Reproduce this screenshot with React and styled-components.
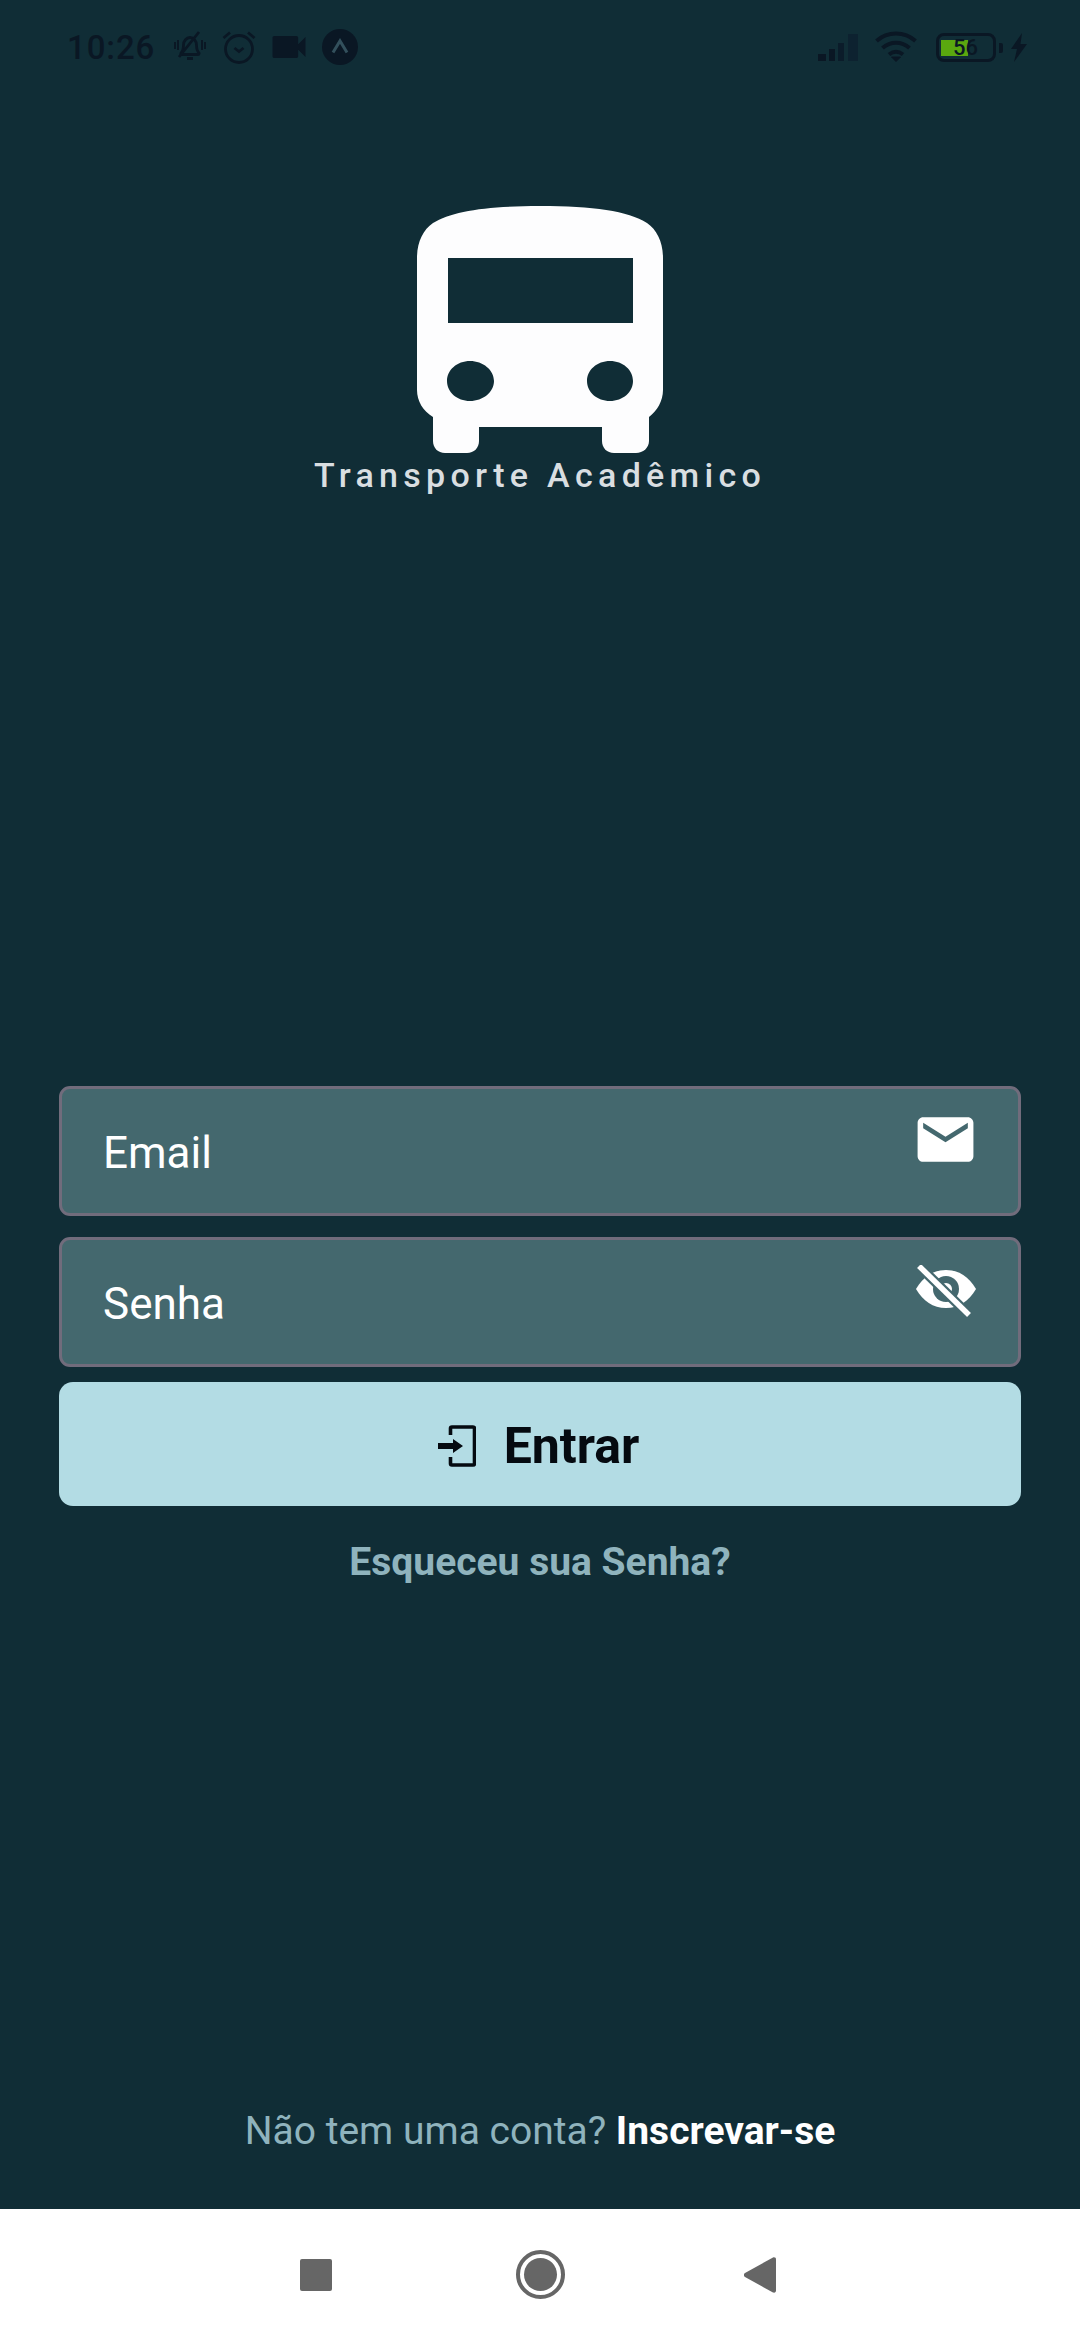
import React from 'react';
import styled, { createGlobalStyle } from 'styled-components';
import { MdEmail, MdVideocam } from 'react-icons/md';

const GlobalStyle = createGlobalStyle`
  html, body {
    margin: 0;
    padding: 0;
    background: #102d36;
  }
  * {
    box-sizing: border-box;
  }
`;

const Screen = styled.div`
  width: 1080px;
  height: 2340px;
  display: flex;
  flex-direction: column;
  background: #102d36;
  font-family: Roboto, "Liberation Sans", sans-serif;
  overflow: hidden;
`;

const StatusBar = styled.div`
  height: 94px;
  flex: none;
  display: flex;
  align-items: center;
  justify-content: space-between;
  padding: 0 53px 0 67px;
  color: #0a1724;
`;

const StatusGroup = styled.div`
  display: flex;
  align-items: center;
  gap: ${props => props.$gap || 15}px;
`;

const Time = styled.span`
  font-size: 33px;
  font-weight: 500;
  letter-spacing: .9px;
  margin-right: 3px;
`;

const VideoIcon = styled(MdVideocam)`
  margin: 0 -4px;
`;

const Battery = styled.div`
  position: relative;
  width: 60px;
  height: 29px;
  border: 3px solid #0a1724;
  border-radius: 8px;
  margin-right: 7px;

  &:after {
    content: '';
    position: absolute;
    right: -10px;
    top: 7px;
    width: 4px;
    height: 10px;
    border-radius: 0 2px 2px 0;
    background: #0a1724;
  }
`;

const BatteryFill = styled.div`
  position: absolute;
  left: 2px;
  top: 4px;
  width: 27px;
  height: 16px;
  background: #5aa80f;
`;

const BatteryText = styled.span`
  position: absolute;
  left: 14px;
  top: 0;
  font-size: 22px;
  line-height: 23px;
  font-weight: 500;
`;

const Main = styled.main`
  flex: 1;
  display: flex;
  flex-direction: column;
`;

const Logo = styled.div`
  display: flex;
  flex-direction: column;
  align-items: center;
  padding-top: 112px;
`;

const LogoTitle = styled.h1`
  margin: 4px 0 0;
  font-size: 34px;
  line-height: 36px;
  font-weight: 500;
  letter-spacing: 5.3px;
  color: #d9dee1;
`;

const Form = styled.form`
  display: flex;
  flex-direction: column;
  gap: 15px;
  padding: 0 59px;
  margin-top: 593px;
`;

const Field = styled.div`
  position: relative;
  height: 130px;
  margin-bottom: ${props => props.$spaced ? 6 : 0}px;
`;

const Input = styled.input`
  width: 100%;
  height: 100%;
  padding: 4px 100px 0 41px;
  border: 3px solid #716c7c;
  border-radius: 11px;
  outline: none;
  background: #44686e;
  color: #fff;
  font-family: inherit;
  font-size: 44px;

  &::placeholder {
    color: #fff;
    opacity: 1;
  }
`;

const FieldIcon = styled.div`
  position: absolute;
  right: ${props => props.$right}px;
  top: ${props => props.$top}px;
  display: flex;
  color: #fff;
`;

const SubmitButton = styled.button`
  height: 124px;
  display: flex;
  align-items: center;
  justify-content: center;
  gap: 28px;
  padding: 4px 3px 0 0;
  border: none;
  border-radius: 14px;
  background: #b3dce4;
  color: #050a10;
  font-family: inherit;
  font-size: 50px;
  font-weight: 700;
`;

const Forgot = styled.a`
  margin-top: 19px;
  text-align: center;
  font-size: 39px;
  line-height: 44px;
  font-weight: 700;
  color: #8fb3bd;
`;

const Footer = styled.p`
  margin: auto 0 57px;
  text-align: center;
  font-size: 39px;
  line-height: 42px;
  color: #8fb3bd;

  strong {
    color: #fff;
    font-weight: 700;
  }
`;

const NavBar = styled.nav`
  height: 131px;
  flex: none;
  display: flex;
  align-items: center;
  padding-left: 300px;
  background: #fff;
`;

const NavSquare = styled.div`
  width: 32px;
  height: 32px;
  margin-right: 184px;
  border-radius: 2px;
  background: #666;
`;

const NavRing = styled.div`
  width: 49px;
  height: 49px;
  margin-right: 179px;
  display: flex;
  align-items: center;
  justify-content: center;
  border: 4px solid #666;
  border-radius: 50%;

  &:after {
    content: '';
    width: 33px;
    height: 33px;
    border-radius: 50%;
    background: #666;
  }
`;

const BellOff = () => (
  <svg width="34" height="32" viewBox="0 0 34 32" fill="none" stroke="#0a1724" strokeWidth="2.8">
    <path d="M8 22c2-2 2.500-4 2.500-8 0-4 3-7.500 6.500-7.500s6.500 3.500 6.500 7.500c0 4 .5 6 2.500 8 0 0 .5 1.500-1 1.500H9c-1.500 0-1-1.500-1-1.500z" />
    <path d="M14 27.500h6" strokeWidth="3" />
    <path d="M26 1 6 26" />
    <path d="M2 11v7M5 9v10M29 9v10M32 11v7" strokeWidth="2" />
  </svg>
);

const AlarmIcon = () => (
  <svg width="34" height="34" viewBox="0 0 34 34" fill="none" stroke="#0a1724" strokeWidth="2.8">
    <circle cx="17" cy="19" r="13.500" />
    <path d="M1.500 8 8 2.500M32.500 8 26 2.500" />
    <path d="m12.500 18 4.500 3.500 4.500-3.500" />
  </svg>
);

const ExpoIcon = () => (
  <svg width="36" height="36" viewBox="0 0 36 36">
    <circle cx="18" cy="18" r="18" fill="#0a1724" />
    <path d="M11 23.500 18 12l7 11.500" fill="none" stroke="#33505c" strokeWidth="3" />
  </svg>
);

const SignalIcon = () => (
  <svg width="40" height="27" viewBox="0 0 40 27">
    <rect x="0" y="20" width="8" height="7" fill="#0a1724" />
    <rect x="11" y="15" width="6" height="12" fill="#0a1724" />
    <rect x="20" y="9" width="6" height="18" fill="#0b1c2a" />
    <rect x="30" y="0" width="10" height="27" fill="#0d2230" />
  </svg>
);

const WifiIcon = () => (
  <svg width="44" height="32" viewBox="0 0 44 32" fill="none" stroke="#0a1724" strokeWidth="4">
    <path d="M1.500 10c11-10 28-10 39 0" />
    <path d="M7.500 17c8-7 19-7 27 0" />
    <path d="M14 23.500c4.500-3.500 9.500-3.500 14 0" />
    <path d="m16.500 26 4.500 4.500 4.500-4.500z" fill="#0a1724" strokeWidth="1" />
  </svg>
);

const BoltIcon = () => (
  <svg width="16" height="29" viewBox="0 0 16 29">
    <path d="M11 0 0 16h6l-3 13L16 11H9.500z" fill="#0a1724" />
  </svg>
);

const BusIcon = () => (
  <svg width="246" height="247" viewBox="0 0 246 247">
    <path
      fillRule="evenodd"
      fill="#fdfdfe"
      d="M123 0C70 0 35 5 16 17 6 24 0 36 0 52V184C0 195 6 205 16 211V235C16 242 21 247 28 247H50C57 247 62 242 62 235V221H185V235C185 242 190 247 197 247H219C226 247 232 242 232 235V211C240 205 246 195 246 184V52C246 36 240 24 230 17 211 5 176 0 123 0ZM31 52V117H216V52ZM53 155C40 155 30 164 30 175 30 186 40 195 53 195 66 195 77 186 77 175 77 164 66 155 53 155ZM193 155C180 155 170 164 170 175 170 186 180 195 193 195 206 195 216 186 216 175 216 164 206 155 193 155Z"
    />
  </svg>
);

const EyeOffIcon = () => (
  <svg width="62" height="52" viewBox="0 0 62 52">
    <path d="M1 24C8 12 18 5 31 5s23 7 30 19c-7 12-17 19-30 19S8 36 1 24z" fill="#fff" />
    <circle cx="31" cy="24" r="13" fill="#44686e" />
    <circle cx="31" cy="24" r="6" fill="#fff" />
    <path d="M4 1 54 50" stroke="#44686e" strokeWidth="10" />
    <path d="M4 1 54 50" stroke="#fff" strokeWidth="5.500" />
  </svg>
);

const LoginIcon = () => (
  <svg width="38" height="42" viewBox="0 0 38 42" fill="none">
    <path d="M12.500 10V3.500c0-1 .5-1.500 1.500-1.500h21c1 0 1.500.5 1.500 1.500v35c0 1-.5 1.500-1.500 1.500H14c-1 0-1.500-.5-1.500-1.500V32" stroke="#050a10" strokeWidth="3.600" />
    <path d="M0 18h15v-4l10 7-10 7v-4H0z" fill="#050a10" />
  </svg>
);

const BackTriangle = () => (
  <svg width="32" height="36" viewBox="0 0 32 36">
    <path d="M29 0.500c2-.5 3 .5 3 2v31c0 1.500-1 2.500-3 2L1 20c-1.500-1-1.500-3 0-4z" fill="#666" />
  </svg>
);

export default function App() {
  return (
    <Screen>
      <GlobalStyle />
      <StatusBar>
        <StatusGroup>
          <Time>10:26</Time>
          <BellOff />
          <AlarmIcon />
          <VideoIcon size={44} />
          <ExpoIcon />
        </StatusGroup>
        <StatusGroup $gap={17}>
          <SignalIcon />
          <WifiIcon />
          <StatusGroup $gap={8}>
            <Battery>
              <BatteryFill />
              <BatteryText>56</BatteryText>
            </Battery>
            <BoltIcon />
          </StatusGroup>
        </StatusGroup>
      </StatusBar>
      <Main>
        <Logo>
          <BusIcon />
          <LogoTitle>Transporte Acadêmico</LogoTitle>
        </Logo>
        <Form>
          <Field $spaced>
            <Input type="email" placeholder="Email" />
            <FieldIcon $right={42} $top={20}>
              <MdEmail size={67} />
            </FieldIcon>
          </Field>
          <Field>
            <Input type="password" placeholder="Senha" />
            <FieldIcon $right={44} $top={28}>
              <EyeOffIcon />
            </FieldIcon>
          </Field>
          <SubmitButton type="button">
            <LoginIcon />
            Entrar
          </SubmitButton>
          <Forgot>Esqueceu sua Senha?</Forgot>
        </Form>
        <Footer>
          Não tem uma conta? <strong>Inscrevar-se</strong>
        </Footer>
      </Main>
      <NavBar>
        <NavSquare />
        <NavRing />
        <BackTriangle />
      </NavBar>
    </Screen>
  );
}
